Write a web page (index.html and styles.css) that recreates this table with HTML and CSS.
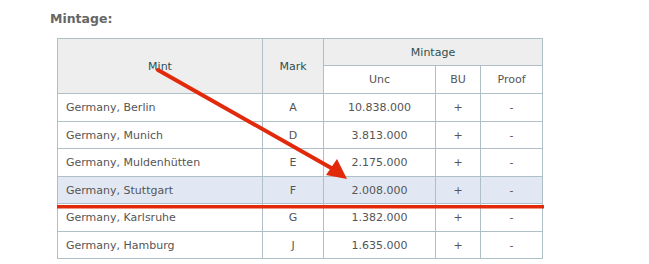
FILE: index.html
```html
<!DOCTYPE html>
<html>
<head>
<meta charset="utf-8">
<link rel="stylesheet" href="styles.css">
</head>
<body>
<div class="page">
  <h3 class="title">Mintage:</h3>
  <div class="wrap">
    <table class="mint">
      <colgroup>
        <col class="c-mint"><col class="c-mark"><col class="c-unc"><col class="c-bu"><col class="c-proof">
      </colgroup>
      <thead>
        <tr class="h1"><th rowspan="2">Mint</th><th rowspan="2">Mark</th><th colspan="3">Mintage</th></tr>
        <tr class="h2"><th>Unc</th><th>BU</th><th>Proof</th></tr>
      </thead>
      <tbody>
        <tr><td class="l">Germany, Berlin</td><td>A</td><td>10.838.000</td><td>+</td><td>-</td></tr>
        <tr><td class="l">Germany, Munich</td><td>D</td><td>3.813.000</td><td>+</td><td>-</td></tr>
        <tr><td class="l">Germany, Muldenhütten</td><td>E</td><td>2.175.000</td><td>+</td><td>-</td></tr>
        <tr class="hl"><td class="l">Germany, Stuttgart</td><td>F</td><td>2.008.000</td><td>+</td><td>-</td></tr>
        <tr><td class="l">Germany, Karlsruhe</td><td>G</td><td>1.382.000</td><td>+</td><td>-</td></tr>
        <tr><td class="l">Germany, Hamburg</td><td>J</td><td>1.635.000</td><td>+</td><td>-</td></tr>
      </tbody>
    </table>
    <svg class="marks" width="649" height="264" viewBox="0 0 649 264">
      <line x1="158" y1="70" x2="333" y2="169" stroke="#e22a0b" stroke-width="4" stroke-linecap="round"/>
      <polygon points="337,159 347,179 326,175" fill="#e22a0b"/>
      <rect x="57" y="205" width="487" height="3.5" fill="#e22a0b"/>
    </svg>
  </div>
</div>
</body>
</html>
```
FILE: styles.css
```css
html, body {
  margin: 0;
  padding: 0;
  background: #ffffff;
}
.page {
  position: relative;
  padding: 11px 0 0 50px;
  font-family: "DejaVu Sans", Verdana, sans-serif;
}
.title {
  margin: 0;
  font-size: 12.5px;
  font-weight: bold;
  color: #666666;
  line-height: 15px;
}
.wrap {
  margin: 12px 0 0 7px;
}
.mint {
  border-collapse: collapse;
  table-layout: fixed;
  width: 486px;
  font-size: 11px;
}
.c-mint { width: 205px; }
.c-mark { width: 61px; }
.c-unc { width: 112px; }
.c-bu { width: 45px; }
.c-proof { width: 62px; }
.mint th, .mint td {
  border: 1px solid #aebfc8;
  padding: 0;
  text-align: center;
  font-weight: normal;
  height: 26px;
}
.mint th {
  background: #eeeeee;
  color: #2e4f4f;
}
.mint .h2 th {
  background: #ffffff;
  color: #555555;
  height: 27px;
}
.mint td {
  color: #555555;
}
.mint td.l {
  text-align: left;
  padding-left: 8px;
}
.mint tbody tr:nth-child(odd) td { height: 27px; }
.mint tbody tr:nth-child(even) td { height: 26px; }
.mint tr.hl td {
  background: #e2e8f3;
}
.marks {
  position: absolute;
  left: 0;
  top: 0;
  pointer-events: none;
}
```
